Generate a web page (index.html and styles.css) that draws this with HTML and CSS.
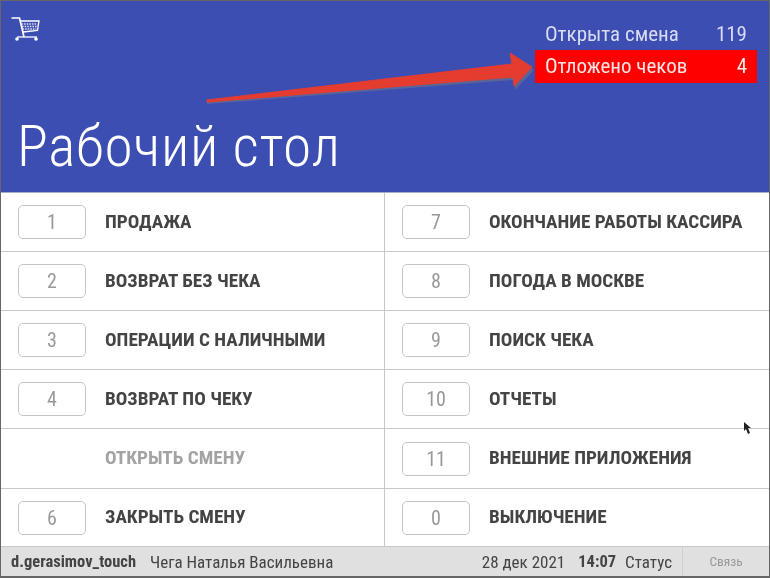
FILE: index.html
```html
<!DOCTYPE html>
<html lang="ru">
<head>
    <meta charset="UTF-8">
    <meta name="viewport" content="width=device-width, initial-scale=1.0">
    <title>Рабочий стол</title>
    <link rel="stylesheet" href="styles.css">
</head>
<body>
    <div class="screen">
        <!-- Header -->
        <header class="header">
            <div class="header-top">
                <svg class="cart-icon" width="30" height="26" viewBox="0 0 30 26" fill="none" stroke="#fff">
                    <path d="M0.5 2H8.5L13 21" stroke-width="1.7"/>
                    <path d="M9 5H28L26.5 14.5L12 16" stroke-width="1.3"/>
                    <path d="M10.5 8H26.5M11 10.5H26M11.5 13H25.5" stroke-width="1.3" stroke-dasharray="1.6 1" opacity="0.8"/>
                    <path d="M6 21H26" stroke-width="1.3"/>
                    <circle cx="6" cy="23" r="1.8" fill="#fff" stroke="none"/>
                    <circle cx="25" cy="23" r="1.8" fill="#fff" stroke="none"/>
                </svg>
                <div class="status-list">
                    <div class="status-row">
                        <span>Открыта смена</span>
                        <span>119</span>
                    </div>
                    <div class="status-row status-alert">
                        <span>Отложено чеков</span>
                        <span>4</span>
                    </div>
                </div>
            </div>
            <h1 class="title">Рабочий стол</h1>
        </header>

        <!-- Menu -->
        <main class="menu">
            <div class="menu-item"><span class="key">1</span><span class="label">ПРОДАЖА</span></div>
            <div class="menu-item"><span class="key">7</span><span class="label">ОКОНЧАНИЕ РАБОТЫ КАССИРА</span></div>
            <div class="menu-item"><span class="key">2</span><span class="label">ВОЗВРАТ БЕЗ ЧЕКА</span></div>
            <div class="menu-item"><span class="key">8</span><span class="label">ПОГОДА В МОСКВЕ</span></div>
            <div class="menu-item"><span class="key">3</span><span class="label">ОПЕРАЦИИ С НАЛИЧНЫМИ</span></div>
            <div class="menu-item"><span class="key">9</span><span class="label">ПОИСК ЧЕКА</span></div>
            <div class="menu-item"><span class="key">4</span><span class="label">ВОЗВРАТ ПО ЧЕКУ</span></div>
            <div class="menu-item"><span class="key">10</span><span class="label">ОТЧЕТЫ</span></div>
            <div class="menu-item disabled"><span class="key"></span><span class="label">ОТКРЫТЬ СМЕНУ</span></div>
            <div class="menu-item"><span class="key">11</span><span class="label">ВНЕШНИЕ ПРИЛОЖЕНИЯ</span></div>
            <div class="menu-item"><span class="key">6</span><span class="label">ЗАКРЫТЬ СМЕНУ</span></div>
            <div class="menu-item"><span class="key">0</span><span class="label">ВЫКЛЮЧЕНИЕ</span></div>
        </main>

        <!-- Footer -->
        <footer class="footer">
            <b class="login">d.gerasimov_touch</b>
            <span class="user">Чега Наталья Васильевна</span>
            <span class="date">28 дек 2021</span>
            <b class="time">14:07</b>
            <span class="state">Статус</span>
            <span class="link">Связь</span>
        </footer>
    </div>

    <!-- Annotation arrow drawn over the screenshot -->
    <svg class="arrow" width="340" height="60" viewBox="206 50 340 60">
        <path d="M207 103L513 79L515 89L534 69L511 55L513 65L207 101Z" fill="#5b6498" transform="translate(0 1)"/>
        <path d="M207 102L513 77L514 86L532 67L510 53L512 64L207 100Z" fill="#e53c30" stroke="#e53c30" stroke-linejoin="round"/>
    </svg>

    <!-- Mouse pointer -->
    <svg class="pointer" width="9" height="14" viewBox="0 0 9 14">
        <path d="M1 1L1 10L3 8L5 13L7 12L5 7L8 7Z" fill="#222"/>
    </svg>
</body>
</html>
```

FILE: styles.css
```css
* {
    box-sizing: border-box;
}
html, body {
    margin: 0;
    height: 100%;
}
body {
    font-family: Roboto, "Liberation Sans", sans-serif;
    font-stretch: 85%;
    background: #fff;
    position: relative;
    overflow: hidden;
}
.screen {
    width: 770px;
    height: 578px;
    border: 1px solid #666;
    border-bottom-width: 2px;
    display: flex;
    flex-direction: column;
    filter: blur(0.4px);
}
.header {
    height: 192px;
    background: #3c4eb1;
    color: #fff;
    display: flex;
    flex-direction: column;
    justify-content: space-between;
    border-bottom: 1px solid #a9aec9;
}
.header-top {
    display: flex;
    justify-content: space-between;
    align-items: flex-start;
}
.cart-icon {
    margin: 15px 0 0 10px;
}
.status-list {
    width: 222px;
    margin: 16px 12px 0 0;
    font-size: 21px;
}
.status-row {
    height: 33px;
    padding: 0 10px;
    display: flex;
    justify-content: space-between;
    align-items: center;
    color: #d8dcf3;
}
.status-alert {
    background: #ff0000;
    color: #fbe4e4;
    padding-bottom: 2px;
}
.title {
    margin: 0 0 15px 16px;
    font-size: 57.4px;
    line-height: 60px;
    font-weight: 300;
    letter-spacing: 0.7px;
}
.menu {
    flex: 1;
    display: grid;
    grid-template-columns: 384px 1fr;
    grid-template-rows: 59px 59px 59px 59px 60px 1fr;
}
.menu-item {
    display: flex;
    align-items: center;
    padding-left: 17px;
    border-bottom: 1px solid #c8c8c8;
}
.menu-item:nth-child(odd) {
    border-right: 1px solid #c8c8c8;
}
.menu-item:nth-last-child(-n+2) {
    border-bottom: none;
}
.key {
    width: 68px;
    height: 34px;
    border: 1px solid #c4c4c4;
    border-radius: 5px;
    display: flex;
    align-items: center;
    justify-content: center;
    font-size: 20px;
    color: #999;
}
.label {
    margin: 0 0 2px 19px;
    font-size: 19.2px;
    font-weight: 700;
    color: #444;
    white-space: nowrap;
}
.disabled .key {
    visibility: hidden;
}
.disabled .label {
    color: #a3a3a3;
}
.footer {
    height: 30px;
    background: #e0e0e0;
    border-top: 1px solid #c8c8c8;
    display: flex;
    align-items: center;
    padding-left: 10px;
    font-size: 17px;
    color: #444;
}
.login {
    margin-right: 14px;
    font-size: 16.5px;
}
.date {
    margin-left: auto;
}
.time {
    margin: 0 9px 0 13px;
    font-size: 16.5px;
}
.state {
    margin-right: 10px;
}
.link {
    width: 87px;
    align-self: stretch;
    border-left: 1px solid #d0d0d0;
    display: flex;
    align-items: center;
    justify-content: center;
    font-size: 13.4px;
    color: #999;
}
.arrow {
    position: absolute;
    left: 206px;
    top: 50px;
}
.pointer {
    position: absolute;
    left: 743px;
    top: 421px;
}
```
